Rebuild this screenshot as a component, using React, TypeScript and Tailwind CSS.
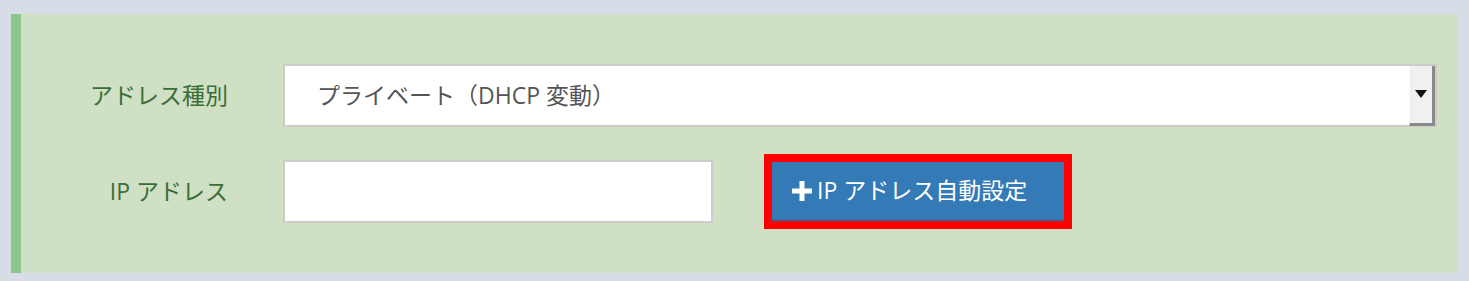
const FONT = "font-['Open_Sans','Noto_Sans_CJK_JP',sans-serif]";

function PlusIcon() {
  return (
    <svg width="20" height="20" viewBox="0 0 20 20" aria-hidden>
      <path d="M7.5 0h5v7.5H20v5h-7.5V20h-5v-7.5H0v-5h7.5z" fill="currentColor" />
    </svg>
  );
}

function SelectArrow() {
  return (
    <span className="flex h-[60px] w-[26px] shrink-0 items-center justify-center border-r-[3px] border-b-[3px] border-l border-[#8a8a8a] border-l-[#fafafa] bg-[#f0f0f0]">
      <svg width="12" height="8" viewBox="0 0 12 8" aria-hidden>
        <path d="M0 0h12L6 8z" fill="#111" />
      </svg>
    </span>
  );
}

export default function App() {
  return (
    <div className={`h-[281px] w-[1469px] bg-[#d6dde7] pt-[14px] pl-[11px] pr-[12px] pb-[8px] ${FONT}`}>
      <div className="flex h-[259px] flex-col gap-[27px] border-l-[10px] border-[#8bc68b] bg-[#cfe0c4] pt-[50px]">
        <div className="flex items-center">
          <label className="w-[207px] shrink-0 text-right text-[23px] text-[#3a6e36]">アドレス種別</label>
          <div className="ml-[55px] flex h-[63px] w-[1154px] items-center justify-between border-2 border-[#cccccc] bg-white pl-[32px]">
            <span className="text-[23px] text-[#555555]">プライベート（DHCP 変動）</span>
            <SelectArrow />
          </div>
        </div>
        <div className="flex items-center">
          <label className="w-[207px] shrink-0 text-right text-[23px] text-[#3a6e36]">IP アドレス</label>
          <input
            type="text"
            className="ml-[55px] h-[63px] w-[430px] border-2 border-[#cccccc] bg-white outline-none"
          />
          <span className="ml-[51px] inline-flex border-[8px] border-[#ff0000]">
            <button
              type="button"
              className="flex h-[59px] w-[292px] items-center gap-[5px] border-b-2 border-[#2e6da4] bg-[#337ab7] pl-[20px] text-[23px] text-white"
            >
              <PlusIcon />
              <span>IP アドレス自動設定</span>
            </button>
          </span>
        </div>
      </div>
    </div>
  );
}
